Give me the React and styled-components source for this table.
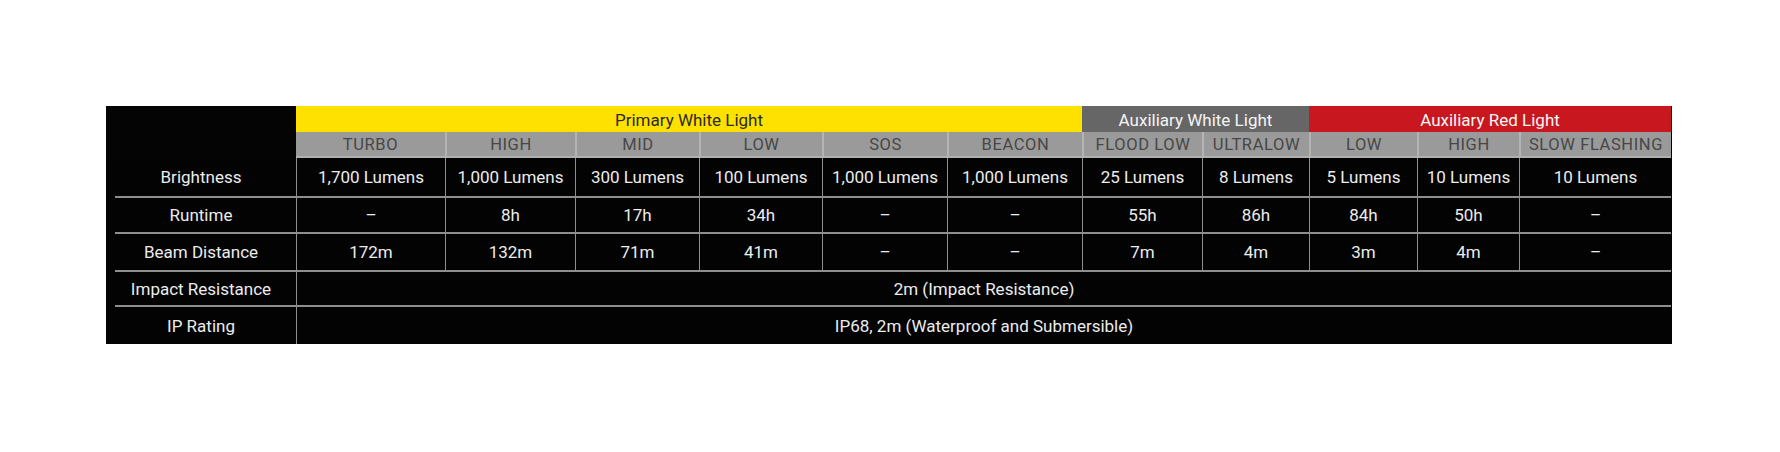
import React from 'react';
import styled, { createGlobalStyle } from 'styled-components';

const GlobalStyle = createGlobalStyle`
    html, body {
        margin: 0;
        padding: 0;
        background: #ffffff;
    }
    body {
        font-family: Roboto, "Liberation Sans", sans-serif;
    }
`;

const Page = styled.div`
    width: 1780px;
    height: 452px;
    padding: 106px 0 0 106px;
    box-sizing: border-box;
`;

const SpecTable = styled.div`
    display: grid;
    width: 1566px;
    grid-template-columns: 190px 149px 130px 124px 123px 125px 135px 120px 107px 108px 102px 152px;
    grid-template-rows: 26px 26px 38px 36px 38px 35px 39px;
    background: #030303;
`;

const Corner = styled.div`
    grid-row: 1 / span 2;
    background: #040404;
`;

const GroupHeader = styled.div`
    grid-column: span ${p => p.$span};
    background: ${p => p.$bg};
    color: ${p => p.$color};
    display: flex;
    align-items: center;
    justify-content: center;
    font-size: 17px;
    padding-top: 1px;
`;

const ModeHeader = styled.div`
    background: #9a9a9a;
    color: #474747;
    display: flex;
    align-items: center;
    justify-content: center;
    font-size: 16.5px;
    letter-spacing: 0.6px;
    text-transform: uppercase;
    white-space: nowrap;
    border-left: ${p => (p.$first ? 'none' : '2px solid #b4b4b4')};
    border-bottom: 2px solid #b0b0b0;
    box-sizing: border-box;
`;

const LabelCell = styled.div`
    margin-left: 9px;
    padding-right: 9px;
    color: #ececec;
    display: flex;
    align-items: center;
    justify-content: center;
    font-size: 17px;
    border-top: ${p => (p.$first ? 'none' : '2px solid #8e8e8e')};
    box-sizing: border-box;
`;

const ValueCell = styled.div`
    grid-column: span ${p => p.$span || 1};
    color: #ececec;
    display: flex;
    align-items: center;
    justify-content: center;
    font-size: 17px;
    white-space: nowrap;
    border-top: ${p => (p.$first ? 'none' : '2px solid #8e8e8e')};
    border-left: 1px solid #8e8e8e;
    box-sizing: border-box;
`;

const groups = [
    { label: 'Primary White Light', span: 6, bg: '#ffe100', color: '#2a2a2a' },
    { label: 'Auxiliary White Light', span: 2, bg: '#666666', color: '#f4f4f4' },
    { label: 'Auxiliary Red Light', span: 3, bg: '#c8171e', color: '#f6f6f6' },
];

const modes = ['Turbo', 'High', 'Mid', 'Low', 'SOS', 'Beacon', 'Flood Low', 'Ultralow', 'Low', 'High', 'Slow Flashing'];

const rows = [
    {
        label: 'Brightness',
        values: ['1,700 Lumens', '1,000 Lumens', '300 Lumens', '100 Lumens', '1,000 Lumens', '1,000 Lumens',
            '25 Lumens', '8 Lumens', '5 Lumens', '10 Lumens', '10 Lumens'],
    },
    {
        label: 'Runtime',
        values: ['–', '8h', '17h', '34h', '–', '–', '55h', '86h', '84h', '50h', '–'],
    },
    {
        label: 'Beam Distance',
        values: ['172m', '132m', '71m', '41m', '–', '–', '7m', '4m', '3m', '4m', '–'],
    },
];

const merged = [
    { label: 'Impact Resistance', value: '2m (Impact Resistance)' },
    { label: 'IP Rating', value: 'IP68, 2m (Waterproof and Submersible)' },
];

const App = () => (
    <Page>
        <GlobalStyle />
        <SpecTable>
            <Corner />
            {groups.map(g => (
                <GroupHeader key={g.label} $span={g.span} $bg={g.bg} $color={g.color}>
                    {g.label}
                </GroupHeader>
            ))}
            {modes.map((m, i) => (
                <ModeHeader key={i} $first={i === 0}>{m}</ModeHeader>
            ))}
            {rows.map((r, ri) => (
                <React.Fragment key={r.label}>
                    <LabelCell $first={ri === 0}>{r.label}</LabelCell>
                    {r.values.map((v, i) => (
                        <ValueCell key={i} $first={ri === 0}>{v}</ValueCell>
                    ))}
                </React.Fragment>
            ))}
            {merged.map(r => (
                <React.Fragment key={r.label}>
                    <LabelCell>{r.label}</LabelCell>
                    <ValueCell $span={11}>{r.value}</ValueCell>
                </React.Fragment>
            ))}
        </SpecTable>
    </Page>
);

export default App;
